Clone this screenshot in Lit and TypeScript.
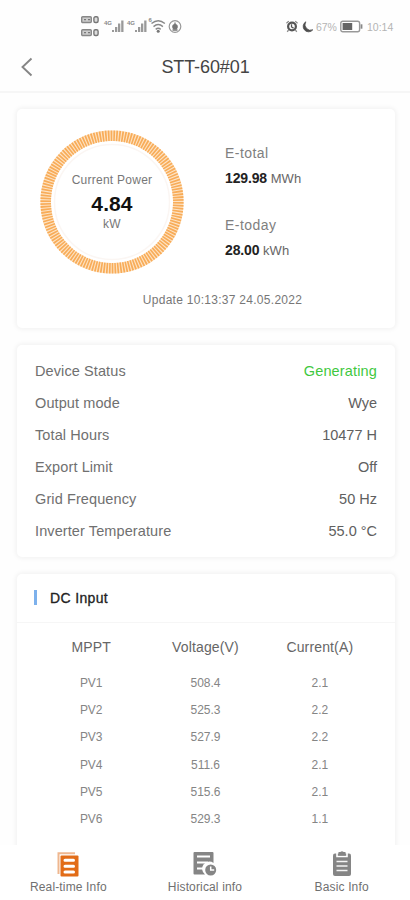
import { LitElement, html, css, svg } from "lit";
import { customElement } from "lit/decorators.js";

const STATUS: [string, string][] = [
  ["Device Status", "Generating"],
  ["Output mode", "Wye"],
  ["Total Hours", "10477 H"],
  ["Export Limit", "Off"],
  ["Grid Frequency", "50 Hz"],
  ["Inverter Temperature", "55.0 °C"],
];

const INPUTS: [string, string, string][] = [
  ["PV1", "508.4", "2.1"],
  ["PV2", "525.3", "2.2"],
  ["PV3", "527.9", "2.2"],
  ["PV4", "511.6", "2.1"],
  ["PV5", "515.6", "2.1"],
  ["PV6", "529.3", "1.1"],
];

const signal = (x: number) => svg`
  <path d="M${x} 16v-2h2v2zM${x + 3} 16v-5h2.300v5zM${x + 6} 16V7.500h2.300V16zM${x + 9.200} 16V4.500h2.300V16z" fill="#999"/>
  <text x=${x - 8} y="8.500" class="net">4G</text>`;

const sim = (y: number) => svg`
  <rect x="0.700" y=${y + 0.7} width="9.600" height="5.800" rx="1" fill="#ccc" stroke="#888" stroke-width="1.400"/>
  <path d="M3 ${y + 3.6}h2M7 ${y + 3.6}h2" stroke="#777" stroke-width="1.400"/>
  <rect x="12.900" y=${y + 0.7} width="4.200" height="5.800" rx="1.500" fill="#ddd" stroke="#777" stroke-width="1.400"/>`;

@customElement("status-bar")
class StatusBar extends LitElement {
  static styles = css`
    :host { display: flex; justify-content: space-between; height: 43px; padding: 16px 17px 0 81px; box-sizing: border-box; }
    .net { font: bold 6px "Liberation Sans", sans-serif; fill: #888; }
    .right { display: flex; height: 21px; align-items: center; font: 10.500px "Liberation Sans", sans-serif; color: #b4b4b4; }
    .moon { margin: 0 3px 0 4px; }
    .pct { width: 22px; margin-right: 2px; letter-spacing: -0.100px; }
    .time { width: 26px; margin-left: 4px; white-space: nowrap; }
    svg { display: block; flex: none; }
  `;
  render() {
    return html`
      <svg width="102" height="22" viewBox="0 0 102 22">
        ${sim(0)}${sim(13)}${signal(31)}${signal(54)}
        <g fill="none" stroke="#888" stroke-width="1.400">
          <path d="M70.500 7.500q6.700-5.500 13.400 0M72.500 10.600q4.700-4 9.400 0M74.700 13.400q2.500-2.200 5 0"/>
          <circle cx="94" cy="10.500" r="5.800" stroke="#999" stroke-width="1.200"/>
        </g>
        <circle cx="77.200" cy="15.300" r="1.500" fill="#777"/>
        <circle cx="94" cy="10.800" r="2.800" fill="#777"/>
        <path d="M94 6.500v3M91.500 14h5" stroke="#777" stroke-width="1.300"/>
        <text x="67.500" y="6" class="net">6</text>
      </svg>
      <div class="right">
        <svg width="12" height="13" viewBox="0 0 13 14">
          <circle cx="6.500" cy="7" r="4.200" fill="none" stroke="#555" stroke-width="2.400"/>
          <path d="M.5 3.500L3 1.200M12.500 3.500L10 1.200M2.800 11L1.300 12.700M10.200 11l1.500 1.700" stroke="#888" stroke-width="1.400"/>
          <path d="M6 4.500V7.500L8.200 8.800" fill="none" stroke="#555" stroke-width="1.400"/>
        </svg>
        <svg class="moon" width="11" height="12" viewBox="0 0 11 12"><path d="M3.800.8A5.400 5.400 0 1 0 10.800 8.800 5.600 5.600 0 0 1 3.800.8z" fill="#4c4c4c" stroke="#4c4c4c" stroke-width=".8"/></svg>
        <span class="pct">67%</span>
        <svg width="23" height="13" viewBox="0 0 23 13">
          <rect x=".8" y="1.200" width="18.800" height="10.600" rx="2" fill="#fff" stroke="#999" stroke-width="1.400"/>
          <rect x="2.600" y="3" width="9.600" height="7" fill="#666"/>
          <path d="M21.500 4.300v4.400" stroke="#888" stroke-width="1.800"/>
        </svg>
        <span class="time">10:14</span>
      </div>`;
  }
}

@customElement("power-ring")
class PowerRing extends LitElement {
  static styles = css`
    :host { display: grid; width: 144px; height: 144px; }
    svg, .text { grid-area: 1 / 1; }
    .text { display: flex; flex-direction: column; align-items: center; padding-top: 41.500px; color: #777; font-size: 12px; }
    .label { line-height: 16px; letter-spacing: 0.250px; white-space: nowrap; }
    .value { font-size: 21px; line-height: 24px; margin-top: 4px; color: #111; font-weight: 700; letter-spacing: 0.100px; }
    .unit { line-height: 14px; margin-top: 1px; letter-spacing: 0.300px; }
  `;
  render() {
    return html`
      <svg width="144" height="144" viewBox="0 0 144 144" fill="none">
        <circle cx="72" cy="72" r="66.300" stroke="#fde3c4" stroke-width="10.600"/>
        <circle cx="72" cy="72" r="66.300" stroke="#f8ac58" stroke-width="10.600" pathLength="300" stroke-dasharray="1.200 .8"/>
        <circle cx="72" cy="72" r="57.500" stroke="#fbf6f3" stroke-width="1.500"/>
      </svg>
      <div class="text">
        <span class="label">Current Power</span>
        <span class="value">4.84</span>
        <span class="unit">kW</span>
      </div>`;
  }
}

@customElement("app-root")
class AppRoot extends LitElement {
  static styles = css`
    :host { display: flex; flex-direction: column; height: 900px; overflow: hidden; background: #fefefe; font-family: "Liberation Sans", Arial, sans-serif; color: #555; }
    .title { display: grid; grid-template-columns: 60px 1fr 60px; align-items: center; height: 50px; box-sizing: border-box; border-bottom: 2px solid #f6f6f6; text-align: center; font-size: 18px; color: #444; flex: none; }
    .title span { letter-spacing: -0.100px; padding-left: 1px; }
    .title svg { margin-left: 20px; }
    main { flex: 1; min-height: 0; overflow: hidden; display: flex; flex-direction: column; gap: 17px; padding: 16px 15px 0 17px; }
    .card { flex: none; box-sizing: border-box; background: #fff; border-radius: 5px; box-shadow: 0 0 5px 1px #f0f0f0; }
    .power { height: 218.500px; padding: 21px 17px 0 23px; }
    .top { display: flex; gap: 41px; }
    .energy { display: flex; flex-direction: column; font-size: 14px; color: #808080; margin: 0; padding-top: 14px; }
    .energy dt { line-height: 18px; letter-spacing: 0.450px; }
    .energy dd { margin: 7px 0 29px; line-height: 18px; height: 18px; font-size: 13px; color: #666; white-space: nowrap; letter-spacing: 0.100px; }
    .energy dd:last-child { margin-bottom: 0; }
    .energy b { color: #222; font-size: 14px; letter-spacing: -0.150px; }
    .update { text-align: center; font-size: 12px; line-height: 16px; margin-top: 18px; padding-left: 27px; letter-spacing: 0.280px; color: #777; }
    .status { height: 212px; padding: 10px 18px 0; }
    .row { display: flex; justify-content: space-between; height: 32.200px; line-height: 32.200px; font-size: 14.500px; letter-spacing: 0.100px; color: #707070; }
    .row span:last-child { color: #606060; letter-spacing: 0; }
    .row .on { color: #3fc83f !important; letter-spacing: 0.150px !important; }
    .input { height: 330px; }
    .head { display: flex; align-items: center; height: 49px; box-sizing: border-box; padding-left: 17px; gap: 13px; border-bottom: 1px solid #f6f6f6; font-size: 14px; color: #222; -webkit-text-stroke: 0.300px #222; letter-spacing: 0.350px; }
    .mark { width: 3px; height: 15px; background: #7db1ec; }
    .cells { display: grid; grid-template-columns: repeat(3, 1fr); padding: 0 18px 0 17px; text-align: center; font-size: 12px; line-height: 27.200px; color: #858585; }
    .cells span { letter-spacing: -0.050px; }
    .names { font-size: 14px; line-height: 48px; height: 47.500px; color: #666; }
    .names span { letter-spacing: 0.150px; }
    nav { flex: none; height: 55px; display: grid; grid-template-columns: repeat(3, 1fr); background: #fff; font-size: 12px; color: #707070; }
    .tab { display: flex; flex-direction: column; align-items: center; padding-top: 6px; line-height: 15px; gap: 3px; letter-spacing: 0.150px; }
    .tab svg { display: block; flex: none; }
  `;
  render() {
    return html`
      <status-bar></status-bar>
      <div class="title">
        <svg width="14" height="20" viewBox="0 0 14 20"><path d="M11.500 1.500L2.500 10l9 8.500" fill="none" stroke="#858585" stroke-width="1.900"/></svg>
        <span>STT-60#01</span>
      </div>
      <main>
        <section class="card power">
          <div class="top">
            <power-ring></power-ring>
            <dl class="energy">
              <dt>E-total</dt><dd><b>129.98</b> MWh</dd>
              <dt>E-today</dt><dd><b>28.00</b> kWh</dd>
            </dl>
          </div>
          <div class="update">Update 10:13:37 24.05.2022</div>
        </section>
        <section class="card status">
          ${STATUS.map(([k, v], i) => html`<div class="row"><span>${k}</span><span class=${i === 0 ? "on" : ""}>${v}</span></div>`)}
        </section>
        <section class="card input">
          <div class="head"><i class="mark"></i>DC Input</div>
          <div class="cells names"><span>MPPT</span><span>Voltage(V)</span><span>Current(A)</span></div>
          ${INPUTS.map((r) => html`<div class="cells">${r.map((c) => html`<span>${c}</span>`)}</div>`)}
        </section>
      </main>
      <nav>
        <div class="tab">
          <svg width="22" height="26" viewBox="0 0 22 26">
            <path d="M1.500 23V2.200H18" fill="none" stroke="#efb78f" stroke-width="2"/>
            <rect x="3.500" y="4.500" width="18" height="21" rx="1" fill="#e26c17"/>
            <path d="M8 9.300h8.500M8 15.200h8.500M8 21.100h8.500" stroke="#fff" stroke-width="3" stroke-linecap="round"/>
          </svg>
          Real-time Info
        </div>
        <div class="tab">
          <svg width="24" height="26" viewBox="0 0 24 26">
            <path d="M1.500 1h18a1 1 0 0 1 1 1v10a7 7 0 0 0-8.500 11.500H1.500a1 1 0 0 1-1-1V2a1 1 0 0 1 1-1z" fill="#858585"/>
            <path d="M4 5.500h13M4 11.500h11M4 17.500h6" stroke="#fff" stroke-width="2"/>
            <circle cx="17.700" cy="19" r="5.500" fill="#858585"/>
            <path d="M17.700 15.500V19h3.500" fill="none" stroke="#fff" stroke-width="1.500"/>
          </svg>
          Historical info
        </div>
        <div class="tab">
          <svg width="20" height="26" viewBox="0 0 20 26">
            <rect x="1" y="2.500" width="18" height="22.500" rx="2" fill="#858585"/>
            <path d="M5 2v3.500h10V2" fill="none" stroke="#fff" stroke-width="1.600"/>
            <path d="M6.500 1h7v3.500h-7z" fill="#858585"/>
            <circle cx="10" cy="2" r="1.800" fill="#858585"/>
            <path d="M4.500 10.500h11M4.500 15h11M4.500 19.500h11" stroke="#f4f4f4" stroke-width="1.700"/>
          </svg>
          Basic Info
        </div>
      </nav>`;
  }
}
